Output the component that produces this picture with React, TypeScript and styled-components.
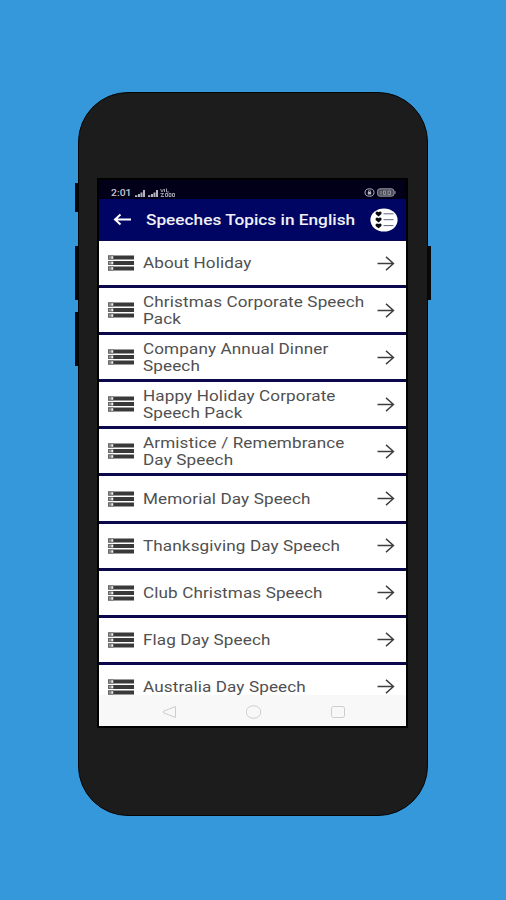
import React from "react";
import styled, { createGlobalStyle } from "styled-components";

const GlobalStyle = createGlobalStyle`
  *, *::before, *::after { box-sizing: border-box; }
  body { margin: 0; background: #3498db; font-family: Roboto, "Liberation Sans", sans-serif; }
`;

const Page = styled.main`
  width: 506px;
  height: 900px;
  padding: 92px 0 0 78px;
  overflow: hidden;
  background: #3498db;
`;

const Phone = styled.div`
  position: relative;
  width: 350px;
  height: 724px;
  padding: 85px 0 0 18px;
  border: 1px solid #050505;
  border-radius: 50px;
  background: #1c1c1c;
`;

const SideKey = styled.span<{ $side: "left" | "right"; $top: number; $height: number }>`
  position: absolute;
  ${(p) => p.$side}: -4px;
  top: ${(p) => p.$top}px;
  width: 3px;
  height: ${(p) => p.$height}px;
  background: #080808;
`;

const Screen = styled.div`
  display: flex;
  flex-direction: column;
  width: 311px;
  height: 550px;
  border: 2px solid #000;
  overflow: hidden;
  background: #000;
`;

const StatusBar = styled.div`
  display: flex;
  flex: none;
  align-items: center;
  justify-content: space-between;
  height: 19px;
  padding: 6px 10px 0 12px;
  background: #020018;
  color: #c6c6d0;
`;

const StatusGroup = styled.div`
  display: flex;
  align-items: center;
  gap: 1px;
`;

const Clock = styled.span`
  width: 22px;
  font-size: 8.5px;
  font-weight: 500;
  line-height: 10px;
  white-space: nowrap;
  transform: scaleX(1.22);
  transform-origin: left;
`;

const Header = styled.header`
  display: flex;
  flex: none;
  align-items: center;
  height: 41px;
  padding: 0 8px 0 14px;
  background: #000462;
  color: #f0f0f8;
`;

const Title = styled.h1`
  flex: 1;
  margin: 0 0 0 14px;
  font-size: 15.4px;
  font-weight: 500;
  line-height: 20px;
  white-space: nowrap;
  transform: scaleX(1.12);
  transform-origin: left;
`;

const List = styled.ul`
  display: flex;
  flex: 1;
  flex-direction: column;
  gap: 3px;
  margin: 0;
  padding: 1px 0 0;
  list-style: none;
  overflow: hidden;
  background: #0c084c;
`;

const Row = styled.li`
  display: flex;
  flex: none;
  align-items: center;
  height: 44.1px;
  padding: 0 11px 0 9px;
  background: #fff;
  color: #505050;
`;

const Label = styled.span`
  flex: 1;
  margin-left: 9px;
  padding-top: 1px;
  font-size: 14.6px;
  line-height: 16.8px;
  letter-spacing: 0.1px;
  white-space: pre;
  transform: scaleX(1.172);
  transform-origin: left;
`;

const NavBar = styled.nav`
  display: flex;
  flex: none;
  align-items: center;
  justify-content: space-between;
  height: 31px;
  padding: 2px 60px 0 62px;
  background: #f8f8f8;
`;

const topics = [
  "About Holiday",
  "Christmas Corporate Speech\nPack",
  "Company Annual Dinner\nSpeech",
  "Happy Holiday Corporate\nSpeech Pack",
  "Armistice / Remembrance\nDay Speech",
  "Memorial Day Speech",
  "Thanksgiving Day Speech",
  "Club Christmas Speech",
  "Flag Day Speech",
  "Australia Day Speech",
];

const SignalIcon = () => (
  <svg width="12" height="8" viewBox="0 0 12 8" fill="#b4b4c0">
    <path d="M1 6.200h2.400V8H1zM4 5h2v3H4zM6.500 3.400h2V8h-2zM9 1h2v7H9z" />
  </svg>
);

const NetworkIcon = () => (
  <svg width="15" height="9" viewBox="0 0 15 9" fill="none" stroke="#9a9aa8" strokeWidth="1">
    <path d="M.5 1 2 4l1.500-3M4.500 1v3M6.500 .5v3.500H9M.5 5.500h3L1 8.500h3M5.500 5.500v3h2v-3zM9 5.500v3h2v-3zM12.500 5.500v3h2v-3z" />
  </svg>
);

const LockIcon = () => (
  <svg width="12" height="9" viewBox="0 0 12 9" fill="none" stroke="#b6b6c2">
    <ellipse cx="5.500" cy="4.500" rx="4.500" ry="3.700" />
    <path d="M4.500 4V2.800h2V4" strokeWidth=".8" />
    <path d="M3.800 4h3.400v2.500H3.800z" fill="#b6b6c2" stroke="none" />
  </svg>
);

const BatteryIcon = () => (
  <svg width="19" height="9" viewBox="0 0 19 9" fill="none" stroke="#9494a0">
    <rect x=".5" y=".8" width="16.500" height="7.400" rx="2.500" fill="#4c4c58" />
    <path d="M18 3v3M4 3v3.500M6.500 3v3.500h2V3zM11 3v3.500h2.500V3z" />
  </svg>
);

const BackIcon = () => (
  <svg width="19" height="14" viewBox="0 0 19 14" fill="none" stroke="#fff" strokeWidth="2">
    <path d="M18 6.500H2M7.500 1.500 2 6.500l5.500 5" />
  </svg>
);

const FavoritesIcon = () => (
  <svg width="28" height="24" viewBox="0 0 28 24">
    <ellipse cx="14" cy="12" rx="13.600" ry="11.600" fill="#fff" />
    {[3.600, 9.500, 15.400].map((y) => (
      <g key={y}>
        <path
          transform={`translate(5.300 ${y}) scale(1.080)`}
          d="M3 4.600 .3 2.300Q-.2.100 1.500 0 2.500 0 3 .6 3.500 0 4.700 0 6.300.200 5.700 2.300Z"
          fill="#08080e"
        />
        <path d={`M13.500 ${y + 2.200}h10`} stroke="#666681" strokeWidth="1" />
      </g>
    ))}
  </svg>
);

const ListIcon = () => (
  <svg width="26" height="16" viewBox="0 0 26 16">
    {[0.500, 6, 11.500].map((y) => (
      <g key={y}>
        <rect x="0" y={y} width="26" height="4" fill="#393939" />
        <rect x="0" y={y} width="5.500" height="4" fill="#6a6a6a" />
        <rect x="1.500" y={y + 1} width="1" height="2" fill="#bbb" />
        <rect x="3.300" y={y + 0.800} width="1.800" height="2.400" fill="#f0f0f0" />
      </g>
    ))}
  </svg>
);

const ForwardIcon = () => (
  <svg width="18" height="15" viewBox="0 0 18 15" fill="none" stroke="#3e3e3e" strokeWidth="1.400">
    <path d="M.5 7.500H16M9 .9 16.500 7.500 9 14.100" />
  </svg>
);

const NavGlyph = ({ children }: { children: React.ReactNode }) => (
  <svg width="16" height="14" viewBox="0 0 16 14" fill="none" stroke="#cdcdcd" strokeWidth="1">
    {children}
  </svg>
);

export default function App() {
  return (
    <>
      <GlobalStyle />
      <Page>
        <Phone>
          <SideKey $side="left" $top={90} $height={29} />
          <SideKey $side="left" $top={153} $height={54} />
          <SideKey $side="left" $top={219} $height={54} />
          <SideKey $side="right" $top={153} $height={54} />
          <Screen>
            <StatusBar>
              <StatusGroup>
                <Clock>2:01</Clock>
                <SignalIcon />
                <SignalIcon />
                <NetworkIcon />
              </StatusGroup>
              <StatusGroup>
                <LockIcon />
                <BatteryIcon />
              </StatusGroup>
            </StatusBar>
            <Header>
              <BackIcon />
              <Title>Speeches Topics in English</Title>
              <FavoritesIcon />
            </Header>
            <List>
              {topics.map((topic) => (
                <Row key={topic}>
                  <ListIcon />
                  <Label>{topic}</Label>
                  <ForwardIcon />
                </Row>
              ))}
            </List>
            <NavBar>
              <NavGlyph>
                <path d="M14.500 1.500v11L2.500 7.800V6.200z" strokeLinejoin="round" />
              </NavGlyph>
              <NavGlyph>
                <ellipse cx="7.500" cy="7" rx="7.300" ry="6.300" />
              </NavGlyph>
              <NavGlyph>
                <rect x="1.500" y="1.500" width="13" height="11" rx="2" />
              </NavGlyph>
            </NavBar>
          </Screen>
        </Phone>
      </Page>
    </>
  );
}
